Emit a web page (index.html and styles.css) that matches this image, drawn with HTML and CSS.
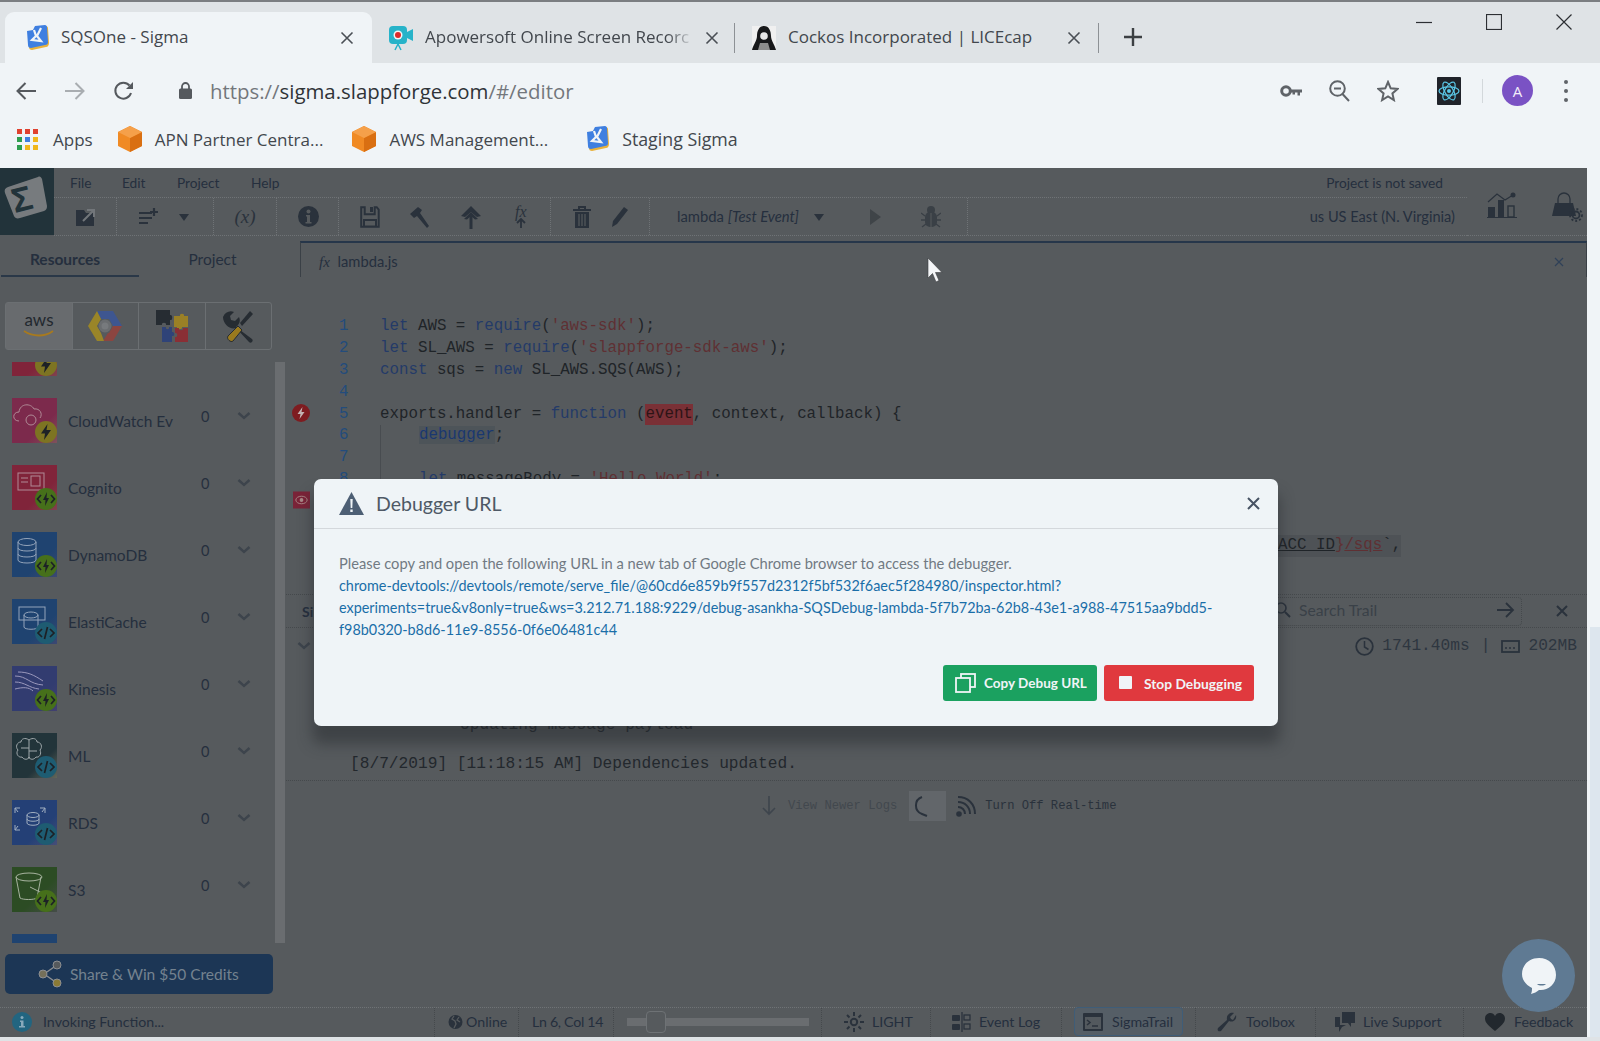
FILE: index.html
```html
<!DOCTYPE html>
<html lang="en">
<head>
<meta charset="utf-8">
<title>SQSOne - Sigma</title>
<link rel="stylesheet" href="styles.css">
</head>
<body>
<svg class="defs" width="0" height="0">
  <defs>
    <symbol id="sigma-fav" viewBox="0 0 24 26"><path d="M3 7 8 6l2-4 11-1c1 0 2 1 2 2l1 15c0 2-1 4-3 4L7 25c-2 0-3-1-3-3z" fill="#e9b23c"/><path d="M2 6 8 5l2-4 10-1c1 0 2 1 2 2l1 15c0 2-1 3-3 3L6 23c-2 0-3-1-3-3z" fill="#3f7fe0"/><path d="m9 5 2 6-4 4 9 1-4-5 4-8" fill="none" stroke="#f0f4f7" stroke-width="2.200"/></symbol>
    <symbol id="cube" viewBox="0 0 24 26"><path d="M12 0 24 6v14l-12 6L0 20V6z" fill="#f08a24"/><path d="M12 12 24 6v14l-12 6z" fill="#d96f12"/><path d="M12 0 24 6l-12 6L0 6z" fill="#f5a04a"/></symbol>
    <symbol id="bolt" viewBox="0 0 22 22"><path d="M12.500 3 6 12.500h4L9 19l7-10h-4.500z" fill="#1d2126"/></symbol>
    <symbol id="code-bolt" viewBox="0 0 22 22"><path d="M6 7 2.500 11 6 15M16 7l3.500 4-3.500 4" fill="none" stroke="#1d2126" stroke-width="1.700"/><path d="M12 4 8 12h2.500L10 18l4-8h-2.500z" fill="#1d2126"/></symbol>
    <symbol id="code" viewBox="0 0 22 22"><path d="M7 7 3 11l4 4M15 7l4 4-4 4M12.500 5l-3 12" fill="none" stroke="#1d2126" stroke-width="1.700"/></symbol>
    <symbol id="chev" viewBox="0 0 14 10"><path d="m1.500 2 5.500 5 5.500-5" fill="none" stroke="#3d444c" stroke-width="2.400"/></symbol>
  </defs>
</svg>

<header class="browser">
  <div class="tabstrip">
    <div class="tab tab-active">
      <svg class="fav" width="24" height="26"><use href="#sigma-fav"/></svg>
      <span class="tab-title">SQSOne - Sigma</span>
      <svg class="tab-x" width="14" height="14" viewBox="0 0 14 14"><path d="m1.500 1.500 11 11m0-11-11 11" stroke="#4a4f55" stroke-width="1.600"/></svg>
    </div>
    <div class="tab tab-2">
      <svg class="fav" width="26" height="28" viewBox="0 0 26 28"><rect x="1" y="2" width="18" height="18" rx="4" fill="#27b3c9"/><path d="m19 8 6-3v12l-6-3z" fill="#27b3c9"/><circle cx="10" cy="11" r="4.500" fill="#f5f5f5"/><circle cx="10" cy="11" r="3" fill="#dd2a2a"/><path d="m10 20-3 6m3-6 3 6" stroke="#27b3c9" stroke-width="1.500"/></svg>
      <span class="tab-title tab-fade">Apowersoft Online Screen Recorc</span>
      <svg class="tab-x" width="14" height="14" viewBox="0 0 14 14"><path d="m1.500 1.500 11 11m0-11-11 11" stroke="#4a4f55" stroke-width="1.600"/></svg>
    </div>
    <div class="tab tab-3">
      <svg class="fav" width="26" height="26" viewBox="0 0 26 26"><rect x="1" y="1" width="24" height="24" fill="#f0f0f0"/><path d="M13 1c5 0 7 5 7 10 0 5 4 9 5 14H1c1-5 5-9 5-14 0-5 2-10 7-10z" fill="#17181a"/><circle cx="13" cy="11" r="3.800" fill="#e6e6e6"/><path d="M9 18h8l2 7H7z" fill="#8c8c8c"/></svg>
      <span class="tab-title">Cockos Incorporated | LICEcap</span>
      <svg class="tab-x" width="14" height="14" viewBox="0 0 14 14"><path d="m1.500 1.500 11 11m0-11-11 11" stroke="#4a4f55" stroke-width="1.600"/></svg>
    </div>
    <svg class="newtab" width="18" height="18" viewBox="0 0 18 18"><path d="M9 0v18M0 9h18" stroke="#3c4043" stroke-width="2.400"/></svg>
    <div class="winctl">
      <svg width="16" height="16" viewBox="0 0 16 16"><path d="M0 8.500h16" stroke="#2c2f33" stroke-width="1.200"/></svg>
      <svg width="16" height="16" viewBox="0 0 16 16"><rect x=".5" y=".5" width="15" height="15" fill="none" stroke="#2c2f33" stroke-width="1.200"/></svg>
      <svg width="16" height="16" viewBox="0 0 16 16"><path d="m.5.500 15 15m0-15-15 15" stroke="#2c2f33" stroke-width="1.200"/></svg>
    </div>
  </div>

  <div class="addr">
    <svg class="nav nav-back" width="20" height="18" viewBox="0 0 20 18"><path d="M9.500 1 1.500 9l8 8M2 9h18" fill="none" stroke="#55595e" stroke-width="2"/></svg>
    <svg class="nav nav-fwd" width="20" height="18" viewBox="0 0 20 18"><path d="m10.500 1 8 8-8 8M18 9H0" fill="none" stroke="#a9adb1" stroke-width="2"/></svg>
    <svg class="nav nav-reload" width="22" height="22" viewBox="0 0 22 22"><path d="M18 13a8 8 0 1 1-1.500-7.500" fill="none" stroke="#55595e" stroke-width="2"/><path d="M20 2v7h-7z" fill="#55595e"/></svg>
    <svg class="nav nav-lock" width="13" height="17" viewBox="0 0 13 17"><path d="M3 7V4.500a3.500 3.500 0 0 1 7 0V7" fill="none" stroke="#55595e" stroke-width="1.800"/><rect y="6.500" width="13" height="10.500" rx="1.500" fill="#55595e"/></svg>
    <span class="url"><span class="url-dim">https://</span>sigma.slappforge.com<span class="url-dim">/#/editor</span></span>
    <div class="addr-right">
      <svg class="ic-key" width="22" height="14" viewBox="0 0 22 14"><circle cx="6" cy="7" r="4.300" fill="none" stroke="#5f6368" stroke-width="3"/><path d="M10 5.500h12v3h-2v3h-2.500v-3H15v2h-2.500v-2H10z" fill="#5f6368"/></svg>
      <svg class="ic-zoom" width="21" height="22" viewBox="0 0 21 22"><circle cx="8.500" cy="8.500" r="7.300" fill="none" stroke="#5f6368" stroke-width="2"/><path d="m13.500 14 6.500 7M5 8.500h7" stroke="#5f6368" stroke-width="2"/></svg>
      <svg class="ic-star" width="22" height="22" viewBox="0 0 22 22"><path d="m11 2 2.700 6.300 6.800.6-5.100 4.500 1.500 6.700L11 16.500l-5.900 3.600 1.500-6.700L1.500 8.900l6.800-.6z" fill="none" stroke="#5f6368" stroke-width="2"/></svg>
      <svg class="ic-react" width="24" height="28" viewBox="0 0 24 28"><rect width="24" height="28" rx="1" fill="#20232a"/><g fill="none" stroke="#5bc8e8" stroke-width="1.200"><ellipse cx="12" cy="14" rx="10" ry="4.200"/><ellipse cx="12" cy="14" rx="10" ry="4.200" transform="rotate(60 12 14)"/><ellipse cx="12" cy="14" rx="10" ry="4.200" transform="rotate(120 12 14)"/></g><circle cx="12" cy="14" r="2" fill="#5bc8e8"/></svg>
      <span class="addr-sep"></span>
      <span class="avatar">A</span>
      <span class="kebab"><i></i><i></i><i></i></span>
    </div>
  </div>

  <nav class="bookmarks">
    <span class="bm bm-apps">
      <span class="apps-grid"><i class="c-r"></i><i class="c-r"></i><i class="c-r"></i><i class="c-g"></i><i class="c-b"></i><i class="c-y"></i><i class="c-g"></i><i class="c-y"></i><i class="c-y"></i></span>
      Apps
    </span>
    <span class="bm bm-apn"><svg width="24" height="26"><use href="#cube"/></svg>APN Partner Centra...</span>
    <span class="bm bm-aws"><svg width="24" height="26"><use href="#cube"/></svg>AWS Management...</span>
    <span class="bm bm-stage"><svg width="24" height="26"><use href="#sigma-fav"/></svg>Staging Sigma</span>
  </nav>
</header>

<main class="app">
  <div class="app-head">
    <div class="logo">
      <svg width="54" height="67" viewBox="0 0 54 67"><path d="M8 19 38 9c2-1 3 0 4 2l5 27c0 3-1 4-3 5L20 50c-3 1-5 0-6-2L5 25c-1-3 0-5 3-6z" fill="#777b7e"/><text x="12" y="42" class="logo-sigma" transform="rotate(-14 26 32)">Σ</text></svg>
    </div>
    <div class="head-main">
      <div class="menu">
        <span class="menu-file">File</span><span class="menu-edit">Edit</span><span class="menu-project">Project</span><span>Help</span>
        <span class="saved">Project is not saved</span>
      </div>
      <div class="tools">
        <div class="tg tg-1">
          <svg width="22" height="20" viewBox="0 0 22 20"><path d="M1 3h8l2 3h8v13H1z" fill="#2a323c"/><path d="m8 14 11-11m-7 0h7v7" fill="none" stroke="#72767a" stroke-width="2"/></svg>
        </div>
        <div class="tg tg-2">
          <svg width="20" height="20" viewBox="0 0 20 20"><path d="M1 6h13M1 11h13M1 16h9M16 1v8M12 5h8" stroke="#2a323c" stroke-width="2.200"/></svg>
          <svg class="caret" width="12" height="8" viewBox="0 0 12 8"><path d="M1 1h10L6 8z" fill="#2a323c"/></svg>
        </div>
        <div class="tg tg-3"><span class="tg-x">(x)</span></div>
        <div class="tg tg-4">
          <svg width="21" height="21" viewBox="0 0 21 21"><circle cx="10.500" cy="10.500" r="10.500" fill="#2a323c"/><circle cx="10.500" cy="5.500" r="2" fill="#565a5d"/><path d="M8 9h4v7h1.500v1.500h-6V16H9v-5.500H8z" fill="#565a5d"/></svg>
        </div>
        <div class="tg tg-5">
          <svg width="20" height="22" viewBox="0 0 20 22"><path d="M1.200 1.200h3.500v7h10v-7h2l2 2.500v17H1.200zM4 14h12v6.500H4z" fill="none" stroke="#2a323c" stroke-width="2"/><rect x="10" y="1" width="3" height="5" fill="#2a323c"/></svg>
          <svg width="22" height="22" viewBox="0 0 22 22"><path d="M1 8 9 1l4 3-2 3 9 13-2 2-10-12-3 2z" fill="#2a323c"/></svg>
          <svg width="22" height="24" viewBox="0 0 22 24"><path d="M11 1 21 11l-4 1-6-5-6 5-4-1z" fill="#2a323c"/><path d="M11 7 18 14l-3 .500-4-3.500-4 3.500-3-.500z" fill="#2a323c"/><path d="M11 10v14" stroke="#2a323c" stroke-width="3"/></svg>
          <span class="fx-up"><em>fx</em><svg width="10" height="10" viewBox="0 0 10 10"><path d="M5 10V2M1 5l4-4 4 4" fill="none" stroke="#2a323c" stroke-width="1.800"/></svg></span>
        </div>
        <div class="tg tg-6">
          <svg width="18" height="22" viewBox="0 0 18 22"><path d="M0 4h18M6 3V1h6v2" fill="none" stroke="#2a323c" stroke-width="2"/><path d="M2 6h14v16H2z" fill="#2a323c"/><path d="M6 8v12M9 8v12M12 8v12" stroke="#565a5d" stroke-width="1.200"/></svg>
          <svg width="18" height="20" viewBox="0 0 18 20"><path d="M14 0l4 3-11 14-5 3 1-6z" fill="#2a323c"/></svg>
        </div>
        <div class="tg tg-7">
          <span class="lambda">lambda <em>[Test Event]</em></span>
          <svg class="caret-l" width="12" height="8" viewBox="0 0 12 8"><path d="M1 1h10L6 8z" fill="#2a323c"/></svg>
          <svg class="play" width="11" height="16" viewBox="0 0 11 16"><path d="M0 0l11 8-11 8z" fill="#3f4448"/></svg>
          <svg class="bug" width="20" height="24" viewBox="0 0 20 24"><ellipse cx="10" cy="5" rx="4" ry="4" fill="#3a4046"/><rect x="4" y="7" width="12" height="15" rx="5" fill="#3a4046"/><path d="M0 8l4 3M20 8l-4 3M0 15h4M20 15h-4M1 22l4-3M19 22l-4-3" stroke="#3a4046" stroke-width="1.300"/><path d="M10 8v14" stroke="#565a5d"/></svg>
        </div>
        <span class="region">us US East (N. Virginia)</span>
      </div>
    </div>
    <div class="head-right">
      <svg width="30" height="26" viewBox="0 0 30 26"><path d="m1 10 9-8 8 6 8-5" fill="none" stroke="#2a323c" stroke-width="1.200"/><circle cx="26" cy="3" r="2.500" fill="#2a323c"/><rect x="1" y="15" width="7" height="10" fill="#2a323c"/><rect x="11" y="8" width="6" height="17" fill="#2a323c"/><rect x="21" y="14" width="6" height="11" fill="none" stroke="#2a323c" stroke-width="1.400"/><path d="M0 25.500h30" stroke="#2a323c"/></svg>
      <svg width="32" height="30" viewBox="0 0 32 30"><path d="M7 12V7a6 6 0 0 1 12 0v5" fill="none" stroke="#2a323c" stroke-width="1.300"/><path d="M4 11h18l3 13H1z" fill="#2a323c"/><circle cx="25" cy="23" r="3.500" fill="none" stroke="#2a323c" stroke-width="1.800"/><circle cx="25" cy="23" r="6" fill="none" stroke="#2a323c" stroke-width="1.800" stroke-dasharray="2 2"/></svg>
    </div>
  </div>

  <div class="app-mid">
    <aside class="side">
      <div class="side-tabs">
        <span class="side-tab side-tab-on">Resources</span>
        <span class="side-tab side-tab-2">Project</span>
      </div>
      <div class="svc-tabs">
        <span class="svc svc-on">
          <svg width="36" height="32" viewBox="0 0 36 32"><text x="18" y="16" class="aws-txt">aws</text><path d="M3 21c9 6 21 6 29 0" fill="none" stroke="#a87a1e" stroke-width="1.800"/></svg>
        </span>
        <span class="svc">
          <svg width="36" height="32" viewBox="0 0 36 32"><path d="M10 1h16l9 15H26l-4-7h-8z" fill="#3e5690"/><path d="M35 16 26 31H16l5-8h1l4-7z" fill="#8c4540"/><path d="M10 1 1 16l9 15h7l-3-8-4-7 4-7z" fill="#9a8528"/><circle cx="18" cy="16" r="5" fill="#777a7d" stroke="#6a6d70" stroke-width="3"/></svg>
        </span>
        <span class="svc">
          <svg width="34" height="34" viewBox="0 0 34 34"><path d="M1 1h14v5c3-1 3 6 0 5v5h-4c1-3-5-3-4 0H1z" fill="#262c32"/><path d="M19 7h6c-1-3 5-3 4 0h4v11h-6c1 3-6 3-5 0h-3z" fill="#9a8026"/><path d="M7 18h4c-1 3 4 3 3 0h3v5c3-1 3 5 0 4v6H7z" fill="#2f4378"/><path d="M20 19h4c-1 3 5 3 4 0h5v14H20v-5c3 1 3-5 0-4z" fill="#8a2f35"/></svg>
        </span>
        <span class="svc">
          <svg width="34" height="34" viewBox="0 0 34 34"><path d="M2 8c2-5 7-7 11-5l-4 4 1 4 4 1 4-4c2 4 0 8-3 10l16 12c2 2-1 5-3 3L15 19C9 21 2 15 2 8z" fill="#262c32"/><path d="M29 2l3 3-11 12-2-3z" fill="#262c32"/><path d="M17 17l4 4-9 11c-2 2-7-2-5-5z" fill="#9a7a1e" stroke="#262c32"/></svg>
        </span>
      </div>
      <div class="res-wrap">
        <ul class="res">
          <li class="row">
            <span class="res-ic ic-red"><svg class="badge b-y" width="22" height="22"><use href="#bolt"/></svg></span>
            <span class="res-name"></span>
          </li>
          <li class="row">
            <span class="res-ic ic-pink">
              <svg class="glyph" width="34" height="30" viewBox="0 0 34 30"><path d="M7 20c-7 0-7-9 0-9 1-9 12-9 15-3 6-1 9 5 6 9" fill="none" stroke="#b08a96" stroke-width="1"/><circle cx="19" cy="19" r="5" fill="none" stroke="#b08a96"/></svg>
              <svg class="badge b-y" width="22" height="22"><use href="#bolt"/></svg>
            </span>
            <span class="res-name">CloudWatch Ev</span><span class="res-n">0</span>
            <svg class="res-chev" width="14" height="10"><use href="#chev"/></svg>
          </li>
          <li class="row">
            <span class="res-ic ic-red">
              <svg class="glyph" width="34" height="30" viewBox="0 0 34 30"><g fill="none" stroke="#b08a96"><rect x="6" y="5" width="26" height="17"/><rect x="19" y="8" width="9" height="10"/><path d="M9 10h7M9 14h7"/></g></svg>
              <svg class="badge b-g" width="22" height="22"><use href="#code-bolt"/></svg>
            </span>
            <span class="res-name">Cognito</span><span class="res-n">0</span>
            <svg class="res-chev" width="14" height="10"><use href="#chev"/></svg>
          </li>
          <li class="row">
            <span class="res-ic ic-blue">
              <svg class="glyph" width="34" height="30" viewBox="0 0 34 30"><g fill="none" stroke="#94a4ba"><ellipse cx="15" cy="7" rx="9" ry="3.500"/><path d="M6 7v18c0 4 18 4 18 0V7M6 13c0 4 18 4 18 0M6 19c0 4 18 4 18 0"/></g></svg>
              <svg class="badge b-g" width="22" height="22"><use href="#code-bolt"/></svg>
            </span>
            <span class="res-name">DynamoDB</span><span class="res-n">0</span>
            <svg class="res-chev" width="14" height="10"><use href="#chev"/></svg>
          </li>
          <li class="row">
            <span class="res-ic ic-blue">
              <svg class="glyph" width="34" height="30" viewBox="0 0 34 30"><g fill="none" stroke="#94a4ba"><rect x="7" y="5" width="26" height="13"/><ellipse cx="19" cy="13" rx="7" ry="3"/><path d="M12 13v12c0 3 14 3 14 0V13"/></g></svg>
              <svg class="badge b-b" width="22" height="22"><use href="#code"/></svg>
            </span>
            <span class="res-name">ElastiCache</span><span class="res-n">0</span>
            <svg class="res-chev" width="14" height="10"><use href="#chev"/></svg>
          </li>
          <li class="row">
            <span class="res-ic ic-indigo">
              <svg class="glyph" width="34" height="30" viewBox="0 0 34 30"><path d="M3 7c12 0 14 8 28 9M3 13c10 0 14 6 24 7M3 20c8-2 14-2 18 2M6 3c10 0 16 3 25 9" fill="none" stroke="#9a98bc"/></svg>
              <svg class="badge b-g" width="22" height="22"><use href="#code-bolt"/></svg>
            </span>
            <span class="res-name">Kinesis</span><span class="res-n">0</span>
            <svg class="res-chev" width="14" height="10"><use href="#chev"/></svg>
          </li>
          <li class="row">
            <span class="res-ic ic-dark">
              <svg class="glyph" width="34" height="30" viewBox="0 0 34 30"><path d="M17 4c-4-3-8-1-8 2-4 0-6 5-3 8-3 4 1 8 4 7 2 3 6 3 7 0 1 3 5 3 7 0 3 1 6-3 4-7 3-3 1-8-3-8 0-3-4-5-8-2zM17 4v19M9 12h8M17 15h8" fill="none" stroke="#a0a8ab"/></svg>
              <svg class="badge b-b" width="22" height="22"><use href="#code"/></svg>
            </span>
            <span class="res-name">ML</span><span class="res-n">0</span>
            <svg class="res-chev" width="14" height="10"><use href="#chev"/></svg>
          </li>
          <li class="row">
            <span class="res-ic ic-rds">
              <svg class="glyph" width="34" height="30" viewBox="0 0 34 30"><g fill="none" stroke="#a0aec0"><ellipse cx="21" cy="12" rx="6" ry="2.500"/><path d="M15 12v8c0 3 12 3 12 0v-8M15 16c0 3 12 3 12 0M6 9l-3-4m0 5V5h5M30 9l3-4m0 5V5h-5M6 23l-3 4m0-5v5h5"/></g></svg>
              <svg class="badge b-b" width="22" height="22"><use href="#code"/></svg>
            </span>
            <span class="res-name">RDS</span><span class="res-n">0</span>
            <svg class="res-chev" width="14" height="10"><use href="#chev"/></svg>
          </li>
          <li class="row">
            <span class="res-ic ic-green">
              <svg class="glyph" width="34" height="30" viewBox="0 0 34 30"><g fill="none" stroke="#a8b4a0"><ellipse cx="17" cy="7" rx="13" ry="4"/><path d="M4 7l4 21c3 2 14 2 17 0l4-21M18 17l12 6"/></g></svg>
              <svg class="badge b-g" width="22" height="22"><use href="#code-bolt"/></svg>
            </span>
            <span class="res-name">S3</span><span class="res-n">0</span>
            <svg class="res-chev" width="14" height="10"><use href="#chev"/></svg>
          </li>
          <li class="row"><span class="res-ic ic-blue"></span></li>
        </ul>
        <div class="side-scroll"></div>
      </div>
      <button class="share">
        <svg width="24" height="28" viewBox="0 0 24 28"><path d="M6 14 19 5M6 14l13 9" stroke="#8c8f92" stroke-width="1.500"/><circle cx="5" cy="14" r="4" fill="#75705a" stroke="#8c8f92"/><circle cx="19" cy="5" r="4" fill="#565a5d" stroke="#8c8f92"/><circle cx="19" cy="23" r="4" fill="#8a7a35" stroke="#8c8f92"/></svg>
        Share &amp; Win $50 Credits
      </button>
    </aside>

    <section class="work">
      <div class="ed-tabs">
        <span class="ed-tab"><em>fx</em> lambda.js</span>
        <svg class="ed-close" width="10" height="10" viewBox="0 0 10 10"><path d="m1 1 8 8m0-8-8 8" stroke="#2f4058" stroke-width="1.200"/></svg>
      </div>
      <div class="code">
        <div class="ln"><i></i><b>1</b><code><span class="k">let</span> AWS = <span class="k">require</span>(<span class="s">'aws-sdk'</span>);</code></div>
        <div class="ln"><i></i><b>2</b><code><span class="k">let</span> SL_AWS = <span class="k">require</span>(<span class="s">'slappforge-sdk-aws'</span>);</code></div>
        <div class="ln"><i></i><b>3</b><code><span class="k">const</span> sqs = <span class="k">new</span> SL_AWS.SQS(AWS);</code></div>
        <div class="ln"><i></i><b>4</b><code></code></div>
        <div class="ln">
          <i><svg width="18" height="18" viewBox="0 0 18 18"><circle cx="9" cy="9" r="9" fill="#7e1c20"/><path d="M10.500 3 5.500 10h3L7.500 15l5-7h-3z" fill="#c4b4b4"/></svg></i>
          <b>5</b><code>exports.handler = <span class="k">function</span> (<span class="hl-red">event</span>, context, callback) {</code>
        </div>
        <div class="ln"><i></i><b>6</b><code class="guide">    <span class="hl-dbg">debugger</span>;</code></div>
        <div class="ln"><i></i><b>7</b><code class="guide"></code></div>
        <div class="ln"><i></i><b>8</b><code class="guide">    <span class="k">let</span> messageBody = <span class="s">'Hello World'</span>;</code></div>
        <div class="ln"><i class="eye"><svg width="17" height="18" viewBox="0 0 18 18"><rect width="18" height="18" fill="#7a2338"/><ellipse cx="9" cy="9" rx="6" ry="4" fill="none" stroke="#a88"/><circle cx="9" cy="9" r="2" fill="#a88"/></svg></i><b></b><code></code></div>
        <div class="ln"><i></i><b></b><code></code></div>
        <div class="ln ln-tail"><i></i><b></b><code><span class="tail"><u>ACC_ID</u><span class="s">}<u>/sqs</u></span>`,</span></code></div>
      </div>
      <div class="trail">
        <div class="trail-head">
          <span class="trail-tab">SigmaTrail</span>
          <div class="trail-search">
            <svg width="16" height="16" viewBox="0 0 16 16"><circle cx="6" cy="6" r="5" fill="none" stroke="#2a323c" stroke-width="1.600"/><path d="m10 10 5 5" stroke="#2a323c" stroke-width="2"/></svg>
            <span>Search Trail</span>
            <svg class="go" width="18" height="16" viewBox="0 0 18 16"><path d="M0 8h16M9 1l7 7-7 7" fill="none" stroke="#2a323c" stroke-width="1.800"/></svg>
          </div>
          <svg class="trail-x" width="12" height="12" viewBox="0 0 12 12"><path d="m1 1 10 10m0-10L1 11" stroke="#2a323c" stroke-width="2"/></svg>
        </div>
        <div class="metrics">
          <svg class="metric-chev" width="14" height="10"><use href="#chev"/></svg>
          <span class="metric-right">
            <svg width="19" height="19" viewBox="0 0 19 19"><circle cx="9.500" cy="9.500" r="8.300" fill="none" stroke="#2a323c" stroke-width="1.800"/><path d="M9.500 4v6l4 2.500" fill="none" stroke="#2a323c" stroke-width="1.500"/></svg>
            <span>1741.40ms</span><span class="pipe">|</span>
            <svg width="19" height="13" viewBox="0 0 19 13"><rect x="1" y="1" width="17" height="11" fill="none" stroke="#2a323c" stroke-width="1.800"/><path d="M5 7v2M9 7v2M13 7v2" stroke="#2a323c" stroke-width="1.500"/></svg>
            <span>202MB</span>
          </span>
        </div>
        <div class="logs">
          <div class="log log-under">Updating message payload</div>
          <div class="log">[8/7/2019] [11:18:15 AM] Dependencies updated.</div>
        </div>
        <div class="newer">
          <svg width="14" height="20" viewBox="0 0 14 20"><path d="M7 0v18M1 12l6 6 6-6" fill="none" stroke="#3e454d" stroke-width="1.600"/></svg>
          <span class="newer-dim">View Newer Logs</span>
          <span class="spin"><svg width="22" height="26" viewBox="0 0 22 26"><path d="M9 4a9 9 0 0 0 0 17l5 2" fill="none" stroke="#2a323c" stroke-width="2"/></svg></span>
          <svg class="rss" width="20" height="22" viewBox="0 0 20 22"><circle cx="3" cy="19" r="2.800" fill="#2a323c"/><path d="M2 12c4 0 7 3 7 7M2 7c7 0 12 5 12 12M2 2c10 0 17 7 17 17" fill="none" stroke="#2a323c" stroke-width="2"/></svg>
          <span class="newer-on">Turn Off Real-time</span>
        </div>
      </div>
    </section>
  </div>

  <footer class="status">
    <div class="st st-info">
      <svg width="20" height="20" viewBox="0 0 20 20"><circle cx="10" cy="10" r="10" fill="#226580"/><circle cx="10" cy="5.500" r="1.500" fill="#8ab"/><path d="M8 8.500h3.500V14H13v1.500H7V14h2v-4H8z" fill="#8ab"/></svg>
      <span>Invoking Function...</span>
    </div>
    <div class="st st-online">
      <svg width="15" height="16" viewBox="0 0 15 16"><circle cx="7.500" cy="8" r="7" fill="#2a323c"/><path d="M6 2 4 5l3 2 1 3-2 4M11 3l-2 3 3 2" fill="none" stroke="#565a5d" stroke-width="1.300"/></svg>
      <span>Online</span>
    </div>
    <div class="st st-ln"><span>Ln 6, Col 14</span></div>
    <div class="st st-slider"><span class="track"><span class="thumb"></span></span></div>
    <div class="st st-light">
      <svg width="20" height="20" viewBox="0 0 20 20"><circle cx="10" cy="10" r="3.200" fill="none" stroke="#2a323c" stroke-width="2"/><path d="M10 0v4M10 16v4M0 10h4M16 10h4M3 3l2.500 2.500M14.500 14.500 17 17M17 3l-2.500 2.500M5.500 14.500 3 17" stroke="#2a323c" stroke-width="2"/></svg>
      <span>LIGHT</span>
    </div>
    <div class="st st-event">
      <svg width="20" height="20" viewBox="0 0 20 20"><path d="M11 0v20" stroke="#2a323c" stroke-width="1.300"/><rect x="1" y="3" width="8" height="6" rx="1" fill="#2a323c"/><rect x="1" y="12" width="8" height="6" rx="1" fill="#2a323c"/><rect x="13" y="3" width="6" height="5" fill="none" stroke="#2a323c" stroke-width="1.300"/><rect x="13" y="12" width="6" height="5" fill="none" stroke="#2a323c" stroke-width="1.300"/></svg>
      <span>Event Log</span>
    </div>
    <div class="st st-trail">
      <span class="trail-btn">
        <svg width="20" height="18" viewBox="0 0 20 18"><rect width="20" height="18" rx="1" fill="#2a323c"/><rect x="2" y="4" width="16" height="12" fill="#53595e"/><path d="m4 7 3 2.500L4 12" fill="none" stroke="#2a323c" stroke-width="1.500"/><path d="M9 13h6" stroke="#2a323c" stroke-width="1.500"/></svg>
        <span>SigmaTrail</span>
      </span>
    </div>
    <div class="st st-tool">
      <svg width="20" height="20" viewBox="0 0 20 20"><path d="M19 3c1 4-2 8-7 6L4 19c-3 1-4-1-3-3l9-8C9 3 13 0 17 1l-4 4 1 2 2 1z" fill="#2a323c"/></svg>
      <span>Toolbox</span>
    </div>
    <div class="st st-live">
      <svg width="20" height="20" viewBox="0 0 20 20"><path d="M7 0h13v11h-4v4l-3-4H7z" fill="#2a323c"/><path d="M0 5h5v8h6l-4 2-3 5v-5H0z" fill="#2a323c"/></svg>
      <span>Live Support</span>
    </div>
    <div class="st st-feed">
      <svg width="20" height="18" viewBox="0 0 20 18"><path d="M10 18C4 13 0 10 0 5.500 0 2 3 0 5.500 0 7.500 0 9 1 10 3c1-2 2.500-3 4.500-3C17 0 20 2 20 5.500 20 10 16 13 10 18z" fill="#22282e"/></svg>
      <span>Feedback</span>
    </div>
  </footer>
</main>
<div class="bottom-edge"></div>
<div class="page-scroll"></div>

<div class="veil-cursor">
  <svg width="16" height="25" viewBox="0 0 16 25"><path d="M1 0v20l4.500-4.500L9 24l3-1.500L8.500 14.500H15z" fill="#f4f6f8" stroke="#3a3d40" stroke-width=".6"/></svg>
</div>

<div class="chat">
  <svg width="36" height="40" viewBox="0 0 36 40"><path d="M18 1c10 0 17 7 17 17s-9 16-17 15c-2 2-5 3-8 4 1-2 1-5 1-6C5 28 1 23 1 17 1 8 8 1 18 1z" fill="#f0f4f7"/><path d="M16 27c2 2 7 2 9 0z" fill="#5f7a93"/></svg>
</div>

<div class="modal" role="dialog">
  <div class="modal-head">
    <svg width="25" height="23" viewBox="0 0 25 23"><path d="M12.500 0 25 23H0z" fill="#4d5f74"/><path d="M11.300 7h2.400l-.4 9h-1.600zM11.300 17.500h2.400V20h-2.400z" fill="#eff4f7"/></svg>
    <h2>Debugger URL</h2>
    <svg class="modal-x" width="13" height="13" viewBox="0 0 13 13"><path d="m1 1 11 11m0-11L1 12" stroke="#475364" stroke-width="2"/></svg>
  </div>
  <div class="modal-body">
    <p class="modal-text">Please copy and open the following URL in a new tab of Google Chrome browser to access the debugger.</p>
    <a class="modal-link">chrome-devtools://devtools/remote/serve_file/@60cd6e859b9f557d2312f5bf532f6aec5f284980/inspector.html?<br>experiments=true&amp;v8only=true&amp;ws=3.212.71.188:9229/debug-asankha-SQSDebug-lambda-5f7b72ba-62b8-43e1-a988-47515aa9bdd5-<br>f98b0320-b8d6-11e9-8556-0f6e06481c44</a>
    <div class="modal-actions">
      <button class="btn btn-green">
        <svg width="21" height="20" viewBox="0 0 21 20"><rect x="6" y="1" width="14" height="13" fill="none" stroke="#f0f4f7" stroke-width="1.800"/><rect x="1" y="5" width="14" height="14" fill="#1ba160" stroke="#f0f4f7" stroke-width="1.800"/></svg>
        Copy Debug URL
      </button>
      <button class="btn btn-red"><span class="stop"></span>Stop Debugging</button>
    </div>
  </div>
</div>
</body>
</html>
```

FILE: styles.css
```css
* { box-sizing: border-box; }
html, body { margin: 0; padding: 0; }
body {
  width: 1600px; height: 1041px; position: relative; overflow: hidden;
  background: #f0f4f7; font-family: "Lato", "Liberation Sans", sans-serif; color: #252f3e;
}
.defs { position: absolute; }
svg { display: block; flex: none; }
em { font-style: italic; }
ul { list-style: none; margin: 0; padding: 0; }

/* browser chrome */
.browser { height: 168px; background: #f0f4f7; font-family: "Open Sans", sans-serif; color: #42474d; }
.tabstrip { height: 63px; background: #dfe3e6; border-top: 2px solid #7b7e81; display: flex; align-items: flex-end; position: relative; }
.tab { height: 51px; display: flex; align-items: center; font-size: 17px; flex: none; }
.tab-active { width: 367px; margin-left: 5px; background: #f0f4f7; border-radius: 9px 9px 0 0; padding: 0 18px 0 20px; }
.tab-title { flex: 1; margin-left: 12px; white-space: nowrap; overflow: hidden; padding-bottom: 2px; }
.tab-2 { width: 363px; padding: 0 16px 0 16px; position: relative; }
.tab-2 .tab-title, .tab-3 .tab-title { margin-left: 11px; }
.tab-fade { -webkit-mask-image: linear-gradient(90deg, #000 90%, transparent); mask-image: linear-gradient(90deg, #000 90%, transparent); margin-right: 11px; }
.tab-x { flex: none; }
.tab-2::after, .tab-3::after { content: ""; position: absolute; right: 0; top: 11px; height: 30px; width: 1px; background: #8d9195; }
.tab-3 { width: 364px; padding: 0 18px 0 16px; position: relative; }
.newtab { margin: 0 0 17px 25px; }
.winctl { margin-left: auto; align-self: flex-start; display: flex; gap: 54px; padding: 12px 28px 0 0; }
.addr { height: 55px; display: flex; align-items: center; position: relative; padding-left: 16px; }
.nav-fwd { margin-left: 29px; }
.nav-reload { margin-left: 28px; }
.nav-lock { margin-left: 44px; }
.url { margin-left: 18px; font-size: 20.400px; color: #2f3337; }
.url-dim { color: #73777c; }
.addr-right { margin-left: auto; display: flex; align-items: center; padding-right: 32px; }
.ic-zoom { margin-left: 27px; }
.ic-star { margin-left: 27px; }
.ic-react { margin-left: 38px; }
.addr-sep { width: 1px; height: 24px; background: #d3d8db; margin-left: 21px; }
.avatar { width: 31px; height: 31px; border-radius: 50%; background: #7a52c4; color: #f3eef9; font-size: 15px; display: flex; align-items: center; justify-content: center; margin-left: 19px; }
.kebab { display: flex; flex-direction: column; gap: 5px; margin-left: 31px; }
.kebab i { width: 4px; height: 4px; border-radius: 50%; background: #5f6368; }
.bookmarks { height: 50px; display: flex; align-items: center; font-size: 17px; padding-left: 17px; padding-bottom: 8px; }
.bm { display: flex; align-items: center; gap: 13px; white-space: nowrap; }
.bm-apps { gap: 15px; }
.bm-apn { margin-left: 25px; }
.bm-aws { margin-left: 29px; }
.bm-stage { margin-left: 37px; font-size: 17.800px; }
.apps-grid { display: grid; grid-template-columns: repeat(3, 5px); gap: 3px; }
.apps-grid i { width: 5px; height: 5px; }
.c-r { background: #e0412f; } .c-g { background: #2f9e4f; } .c-b { background: #3f7fe0; } .c-y { background: #f0b71c; }

/* app */
.app { width: 1587px; height: 869px; background: #565a5d; display: flex; flex-direction: column; color: #252f3e; font-size: 14.200px; }
.bottom-edge { height: 4px; background: #dfe3e6; }
.app-head { height: 68px; flex: none; display: flex; }
.logo { width: 54px; height: 67px; background: #22333a; flex: none; }
.logo-sigma { font: 700 34px "Liberation Sans", sans-serif; fill: #22333a; }
.head-main { flex: 1; display: flex; flex-direction: column; }
.menu { height: 30px; display: flex; align-items: center; font-size: 13.700px; padding-left: 16px; border-bottom: 1px dotted #6f7376; }
.menu-file { width: 52px; } .menu-edit { width: 55px; } .menu-project { width: 74px; }
.saved { margin-left: auto; margin-right: 24px; }
.tools { height: 38px; display: flex; align-items: center; border-bottom: 1px dotted #6f7376; }
.tg { height: 100%; display: flex; align-items: center; border-right: 1px dotted #6f7376; flex: none; }
.tg-1 { width: 63px; padding-left: 21px; }
.tg-2 { width: 97px; padding-left: 21px; gap: 20px; }
.tg-3 { width: 63px; justify-content: center; }
.tg-x { font: italic 19px "Liberation Serif", serif; color: #2a323c; }
.tg-4 { width: 62px; padding-left: 21px; }
.tg-5 { width: 212px; padding-left: 21px; gap: 29px; }
.tg-6 { width: 99px; padding-left: 22px; gap: 19px; }
.tg-7 { width: 318px; padding-left: 27px; }
.lambda { font-size: 14.800px; width: 131px; white-space: nowrap; padding-bottom: 1px; }
.caret-l { margin-left: 5px; }
.play { margin-left: 45px; }
.bug { margin-left: 40px; }
.fx-up { display: flex; flex-direction: column; align-items: center; font: italic 16px "Liberation Serif", serif; line-height: 13px; color: #2a323c; margin-left: 4px; }
.region { margin-left: auto; margin-right: 12px; font-size: 14.600px; white-space: nowrap; }
.head-right { width: 120px; flex: none; border-bottom: 1px dotted #6f7376; display: flex; align-items: flex-start; gap: 34px; padding: 24px 0 0 20px; height: 68px; }

.app-mid { height: 771px; flex: none; display: flex; }
.side { width: 286px; flex: none; display: flex; flex-direction: column; }
.side-tabs { height: 41px; display: flex; align-items: flex-end; flex: none; }
.side-tab { height: 37px; font-size: 15.500px; text-align: center; line-height: 38px; }
.side-tab-on { font-weight: 700; border-bottom: 2px solid #2a3848; margin-left: 1px; width: 138px; padding-right: 10px; }
.side-tab-2 { width: 145px; padding-left: 2px; }
.svc-tabs { width: 267px; height: 48px; margin: 25px 0 0 5px; display: flex; border: 1px solid #6b6f72; border-radius: 3px; flex: none; }
.svc { flex: 1; display: flex; align-items: center; justify-content: center; border-right: 1px solid #6b6f72; }
.svc:last-child { border-right: 0; }
.svc-on { background: #686b6e; }
.aws-txt { font: 17px "Lato", sans-serif; fill: #22282e; text-anchor: middle; }
.res-wrap { display: flex; height: 581px; margin-top: 12px; flex: none; }
.res { width: 275px; overflow: hidden; flex: none; height: 100%; }
.row { height: 67px; display: flex; align-items: center; padding: 0 0 0 12px; }
.row:first-child { margin-top: -42px; }
.res-ic { width: 45px; height: 45px; position: relative; flex: none; align-self: flex-start; margin-top: 11px; }
.ic-red { background: linear-gradient(135deg, #80243a 65%, #80424e); }
.ic-pink { background: linear-gradient(135deg, #7c2a4c 65%, #7e525c); }
.ic-blue { background: linear-gradient(135deg, #1f4370 65%, #3c4872); }
.ic-indigo { background: linear-gradient(135deg, #323c70 65%, #424070); }
.ic-dark { background: linear-gradient(135deg, #22343a 65%, #62665a); }
.ic-rds { background: linear-gradient(135deg, #244076 65%, #464e78); }
.ic-green { background: linear-gradient(135deg, #2c4c24 60%, #454d47); }
.glyph { position: absolute; left: 0; top: 3px; }
.badge { position: absolute; right: 0; bottom: 0; border-radius: 50%; }
.b-y { background: #7d7422; }
.b-g { background: #46701a; }
.b-b { background: #1e5c72; }
.res-name { width: 133px; margin-left: 11px; font-size: 15.500px; white-space: nowrap; overflow: hidden; }
.res-n { width: 36px; font-size: 14.500px; margin-top: -8px; }
.res-chev { margin-top: -10px; }
.side-scroll { width: 10px; background: #6a6d70; flex: none; }
.share {
  width: 268px; height: 40px; margin: 11px 0 0 5px; flex: none; background: #1c3655; border: 0; border-radius: 5px;
  color: #74828f; font: 15.500px "Lato", sans-serif; display: flex; align-items: center; padding-left: 33px; gap: 8px;
}

.work { flex: 1; min-width: 0; display: flex; flex-direction: column; }
.ed-tabs { height: 36px; margin-top: 5px; margin-left: 14px; border-top: 2px solid #26364a; border-left: 1px solid #3a4046; border-right: 1px solid #3a4046; display: flex; align-items: center; justify-content: space-between; padding: 3px 22px 0 18px; flex: none; }
.ed-tab { font-size: 14.700px; }
.ed-tab em { font: italic 15px "Liberation Serif", serif; margin-right: 4px; }
.code { height: 317px; padding-top: 39px; flex: none; overflow: hidden; font: 15.800px/21.900px "Liberation Mono", monospace; color: #1f2428; }
.ln { height: 21.900px; display: flex; white-space: pre; }
.ln i { width: 50px; flex: none; padding: 0 0 0 6px; }
.ln .eye { padding-left: 7px; }
.ln b { width: 44px; flex: none; font-weight: 400; color: #234c7c; padding-left: 3px; }
.ln code { font: inherit; flex: 1; }
.guide { border-left: 1px solid #484c50; }
.k { color: #243a68; }
.s { color: #5f3033; }
.hl-red { background: #7a3036; color: #2e1416; display: inline-block; }
.hl-dbg { background: #4d5459; color: #1a3870; }
.ln-tail code { padding-left: 898px; }
.tail { background: #4e5256; display: inline-block; }

.trail { flex: 1; display: flex; flex-direction: column; font-family: "Liberation Mono", monospace; }
.trail-head { height: 34px; display: flex; align-items: center; border-top: 1px dotted #45494c; border-bottom: 1px dotted #45494c; font-family: "Lato", sans-serif; flex: none; padding-left: 16px; }
.trail-tab { font-size: 14px; font-weight: 700; width: 11px; overflow: hidden; white-space: nowrap; }
.trail-search { width: 250px; height: 29px; margin-left: auto; border: 1px dotted #45494c; border-radius: 4px; display: flex; align-items: center; padding: 0 6px 2px 2px; font-size: 15.700px; color: #3a4148; margin-right: 34px; }
.trail-search span { flex: 1; margin-left: 8px; }
.trail-x { margin-right: 19px; }
.metrics { height: 36px; display: flex; align-items: center; padding: 0 10px 0 11px; flex: none; font-size: 16.200px; color: #2e3640; }
.metric-right { margin-left: auto; display: flex; align-items: center; gap: 8px; }
.pipe { margin: 0 3px; }
.logs { height: 117px; font-size: 16.200px; border-bottom: 1px dotted #45494c; display: flex; flex-direction: column; justify-content: flex-end; padding: 0 0 5px 64px; flex: none; line-height: 22px; color: #23282d; }
.log-under { margin: 0 0 17px 110px; }
.newer { height: 50px; display: flex; align-items: center; padding-left: 476px; font-size: 12.150px; flex: none; }
.newer-dim { color: #42484e; margin-left: 12px; }
.spin { width: 37px; height: 30px; background: #62666a; margin-left: 12px; display: flex; align-items: center; padding-left: 4px; }
.newer-on { margin-left: 9px; color: #2a323c; }
.rss { margin-left: 10px; }

.status { height: 30px; flex: none; display: flex; align-items: center; border-top: 1px dotted #6f7376; }
.st { display: flex; align-items: center; height: 100%; gap: 8px; border-right: 1px dotted #45494c; flex: none; white-space: nowrap; padding-bottom: 2px; }
.st-info { width: 435px; padding-left: 12px; gap: 11px; }
.st-online { width: 84px; padding-left: 13px; gap: 3px; }
.st-ln { width: 95px; padding-left: 13px; letter-spacing: -.3px; }
.st-slider { width: 208px; padding-left: 13px; }
.track { width: 182px; height: 8px; background: #6a6d70; display: block; position: relative; }
.thumb { position: absolute; left: 19px; top: -7px; width: 20px; height: 22px; border: 1px solid #6e7275; border-radius: 4px; background: #565a5d; }
.st-light { width: 109px; padding-left: 22px; }
.st-event { width: 131px; padding-left: 20px; }
.st-trail { width: 134px; padding-left: 12px; }
.trail-btn { width: 109px; height: 29px; background: #555e66; border: 1px solid #3f5d78; border-radius: 4px; display: flex; align-items: center; gap: 9px; padding-left: 8px; }
.st-tool { width: 120px; padding-left: 21px; gap: 9px; }
.st-live { width: 148px; padding-left: 19px; }
.st-feed { flex: 1; padding-left: 21px; border-right: 0; gap: 9px; }

/* overlays */
.page-scroll { position: absolute; left: 1590px; top: 627px; width: 10px; height: 410px; background: #dde6ee; }
.veil-cursor { position: absolute; left: 927px; top: 258px; }
.chat { position: absolute; left: 1502px; top: 939px; width: 73px; height: 73px; border-radius: 50%; background: #5f7a93; display: flex; align-items: center; justify-content: center; padding-top: 3px; }
.modal {
  position: absolute; left: 314px; top: 479px; width: 964px; height: 247px; background: #eff4f7; border-radius: 7px;
  box-shadow: 0 16px 14px 2px rgba(40, 44, 48, .5);
  display: flex; flex-direction: column; font-family: "Lato", sans-serif;
}
.modal-head { height: 50px; display: flex; align-items: center; border-bottom: 1px solid #d4d8dc; padding: 0 18px 0 25px; flex: none; }
.modal-head h2 { margin: 0 0 0 12px; font-size: 19.500px; font-weight: 400; color: #4e5966; flex: 1; }
.modal-body { flex: 1; padding: 23px 24px 0 25px; font-size: 14.400px; line-height: 22px; }
.modal-text { margin: 0 0 1px; color: #717a83; font-size: 14.700px; }
.modal-link { color: #1a6ea8; display: block; white-space: nowrap; }
.modal-actions { display: flex; justify-content: flex-end; gap: 7px; margin-top: 24px; }
.btn { height: 36px; border: 0; border-radius: 3px; color: #f0f4f7; font: 700 13.800px "Lato", sans-serif; display: flex; align-items: center; white-space: nowrap; }
.btn-green { width: 154px; background: #1ba160; padding-left: 12px; gap: 8px; font-size: 13.500px; }
.btn-red { width: 150px; background: #e0393e; padding-left: 15px; gap: 12px; }
.stop { width: 13px; height: 13px; background: #f0f4f7; border-radius: 1px; margin-bottom: 2px; }
```
